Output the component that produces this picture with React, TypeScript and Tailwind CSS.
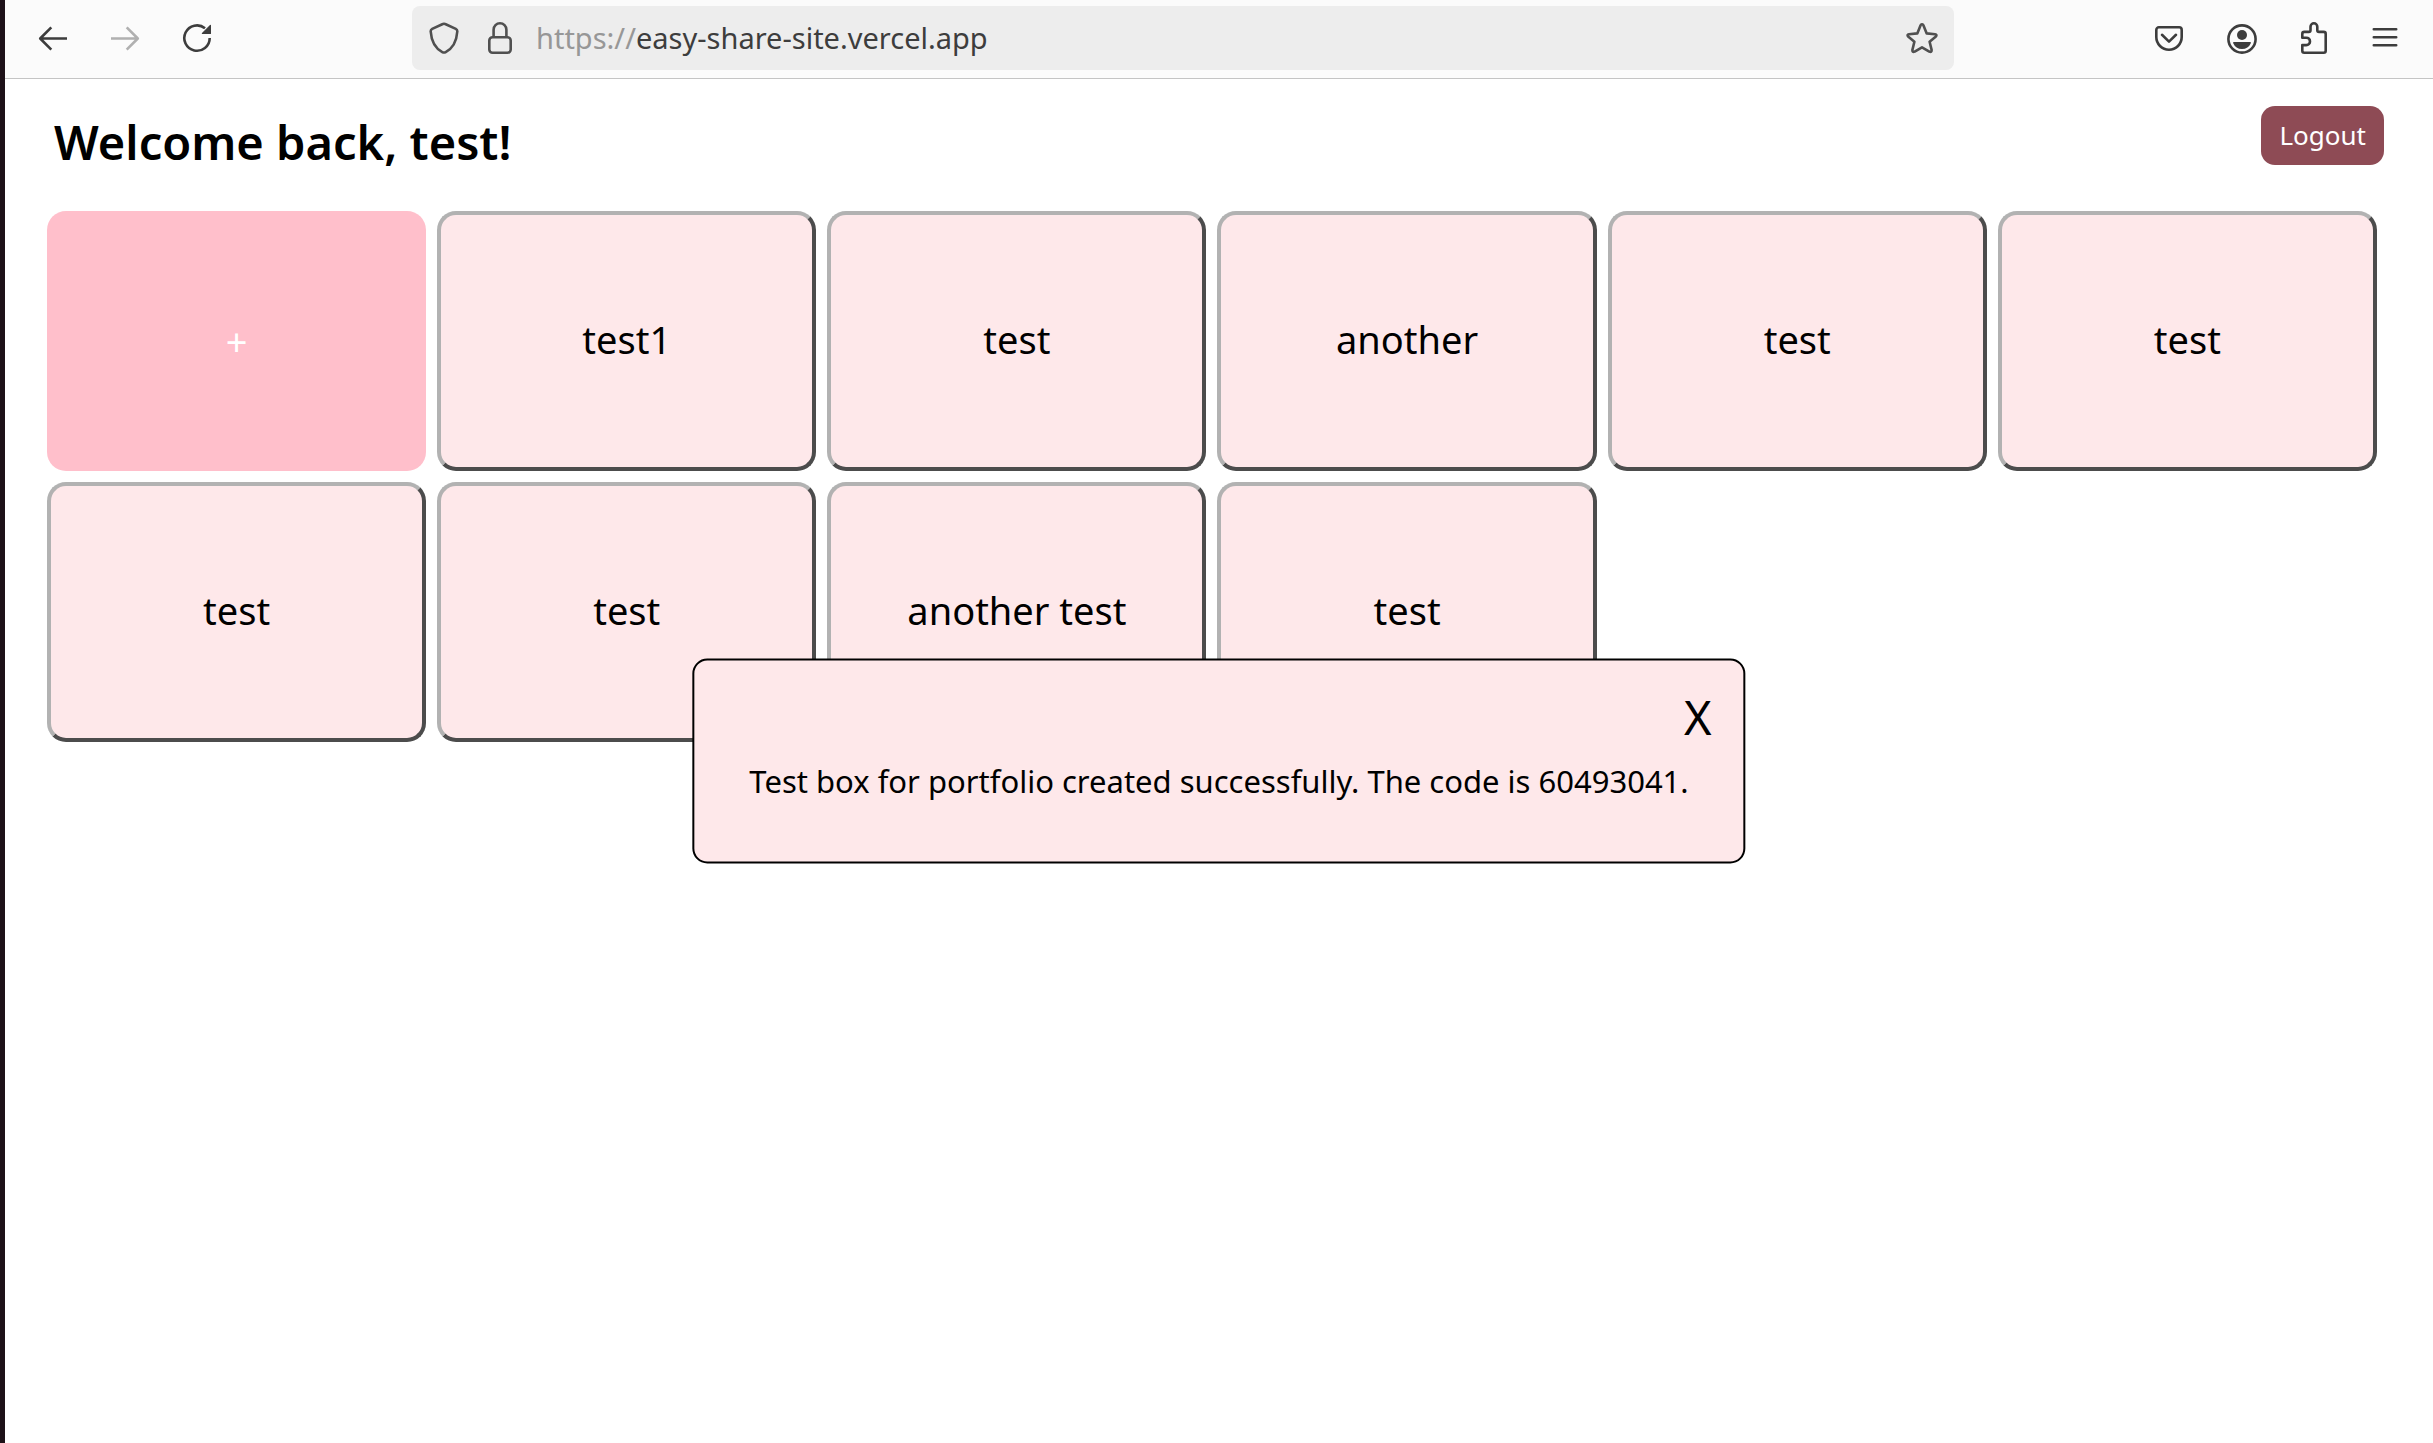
import { useState, type ReactNode } from 'react';

function Icon({ children }: { children: ReactNode }) {
  return (
    <svg
      aria-hidden="true"
      viewBox="0 0 32 32"
      className="size-8 shrink-0"
      fill="none"
      stroke="currentColor"
      strokeWidth={2.6}
      strokeLinejoin="round"
    >
      {children}
    </svg>
  );
}

function ToolButton({ label, disabled, children }: { label: string; disabled?: boolean; children: ReactNode }) {
  return (
    <button type="button" aria-label={label} disabled={disabled} className="shrink-0 disabled:text-[#b0b0b0]">
      <Icon>{children}</Icon>
    </button>
  );
}

function BrowserBar() {
  return (
    <header className="flex items-center justify-between border-b border-[#c4c4c4] bg-[#fbfbfb] px-8 pt-[6px] pb-2 text-[#3d3d3d]">
      <nav aria-label="Navigation" className="flex gap-10">
        <ToolButton label="Back">
          <path d="M30 16.5H4M14.3 5.3L3.2 16.5l11.1 11.2" />
        </ToolButton>
        <ToolButton label="Forward" disabled>
          <path d="M2 16.5h26M17.7 5.3l11.1 11.2-11.1 11.2" />
        </ToolButton>
        <ToolButton label="Reload">
          <path d="M28.7 16A12.7 12.7 0 1 1 24 6.2" />
          <path d="M29.4 3.4v8h-8z" fill="currentColor" strokeWidth={1.2} />
        </ToolButton>
      </nav>

      <div className="mx-[199px] flex h-16 min-w-0 flex-1 items-center rounded-lg bg-[#ededed] px-4">
        <button type="button" aria-label="Tracking protection" className="mr-6 shrink-0 text-[#505050]">
          <Icon>
            <path d="M14.8 2 4.2 6.9Q2.6 7.7 2.7 9.5C3.4 19.5 7.2 26.3 14.3 30.1Q16 31 17.7 30.1C24.8 26.3 28.6 19.5 29.3 9.5Q29.4 7.7 27.8 6.9L17.2 2Q16 1.4 14.8 2z" />
          </Icon>
        </button>
        <button type="button" aria-label="Connection secure" className="mr-5 shrink-0 text-[#505050]">
          <Icon>
            <rect x="5.3" y="15.3" width="21.4" height="15.4" rx="3.2" />
            <path d="M9.6 15V7.7a6.4 6.4 0 0 1 12.8 0V15" />
          </Icon>
        </button>
        <a href="#top" className="flex-1 truncate text-[29px] leading-10 text-[#3d3d3d]">
          <span className="text-[#979797]">https://</span>easy-share-site.vercel.app
        </a>
        <button type="button" aria-label="Bookmark" className="shrink-0 text-[#505050]">
          <Icon>
            <path d="M14.6 3.2Q16 1.3 17.4 3.2L20.7 11.4 29 12.2Q31.3 12.7 29.9 14.5L23.6 19.7 25.6 27.9Q25.8 30.6 23.3 29.6L16 25.3 8.7 29.6Q6.2 30.6 6.4 27.9L8.4 19.7 2.1 14.5Q.7 12.7 3 12.2L11.3 11.4z" />
          </Icon>
        </button>
      </div>

      <div className="flex gap-10">
        <ToolButton label="Save to Pocket">
          <path d="M5.9 5.3h20.2a2.6 2.6 0 0 1 2.6 2.6V15a12.7 12.7 0 0 1-25.4 0V7.9a2.6 2.6 0 0 1 2.6-2.6z" />
          <path d="M9 12.8l7 6.8 7-6.8" strokeLinecap="round" />
        </ToolButton>
        <ToolButton label="Account">
          <circle cx="17" cy="17" r="13.6" />
          <circle cx="17" cy="13" r="5" fill="currentColor" stroke="none" />
          <path d="M9 20h16q1.4 0 .8 1.3a9.6 9.6 0 0 1-17.6 0Q7.6 20 9 20z" fill="currentColor" stroke="none" />
        </ToolButton>
        <ToolButton label="Extensions">
          <path d="M5.3 15.7V11.9a2 2 0 0 1 2-2h4.5q1.7 0 1.7-1.7V4.7a3.4 3.4 0 0 1 6.8 0v3.5q0 1.7 1.7 1.7h4.7a2 2 0 0 1 2 2v16.8a2 2 0 0 1-2 2H7.3a2 2 0 0 1-2-2V23.1h4a3.7 3.7 0 0 0 0-7.4z" />
        </ToolButton>
        <ToolButton label="Menu">
          <path d="M4.8 7.3h22.4M4.8 15.3h22.4M4.8 23.3h22.4" strokeLinecap="round" />
        </ToolButton>
      </div>
    </header>
  );
}

const boxes = ['test1', 'test', 'another', 'test', 'test', 'test', 'test', 'another test', 'test'];
const boxMessage = 'Test box for portfolio created successfully. The code is 60493041.';

export default function App() {
  const [open, setOpen] = useState(true);

  return (
    <div
      id="top"
      className="flex min-h-screen flex-col border-l-[5px] border-[#1d1118] bg-white font-['Noto_Sans',sans-serif] text-black"
    >
      <BrowserBar />
      <main className="relative flex-1 pr-14 pl-[42px]">
        <div className="-mr-[7px] flex items-start justify-between pt-[27px] pb-[33px] pl-[7px]">
          <h1 className="text-[47px] leading-[72px] font-semibold">Welcome back, test!</h1>
          <button type="button" className="rounded-[14px] bg-[#8e4b55] px-[18px] py-3 text-[26px] leading-[35px] text-white">
            Logout
          </button>
        </div>

        <div className="grid grid-cols-6 gap-[11px]">
          <button type="button" aria-label="Create a box" className="h-[260px] rounded-[19px] bg-[#ffbfcb] text-[38px] text-white">
            +
          </button>
          {boxes.map((name, i) => (
            <button
              key={i}
              type="button"
              className="h-[260px] rounded-[19px] border-4 border-t-[#b2b2b2] border-r-[#4c4c4c] border-b-[#4c4c4c] border-l-[#b2b2b2] bg-[#fee8ea] pb-1 text-[38px]"
            >
              {name}
            </button>
          ))}
        </div>

        {open && (
          <div
            role="dialog"
            aria-label="Box created"
            className="absolute top-1/2 left-1/2 flex -translate-x-1/2 -translate-y-1/2 flex-col rounded-[15px] border-2 border-black bg-[#fee8ea] pt-9 pb-[61px] whitespace-nowrap"
          >
            <button
              type="button"
              aria-label="Close"
              onClick={() => setOpen(false)}
              className="mr-8 self-end text-[47px] leading-10"
            >
              X
            </button>
            <p className="mt-6 px-[55px] text-[31px] leading-10">{boxMessage}</p>
          </div>
        )}
      </main>
    </div>
  );
}
